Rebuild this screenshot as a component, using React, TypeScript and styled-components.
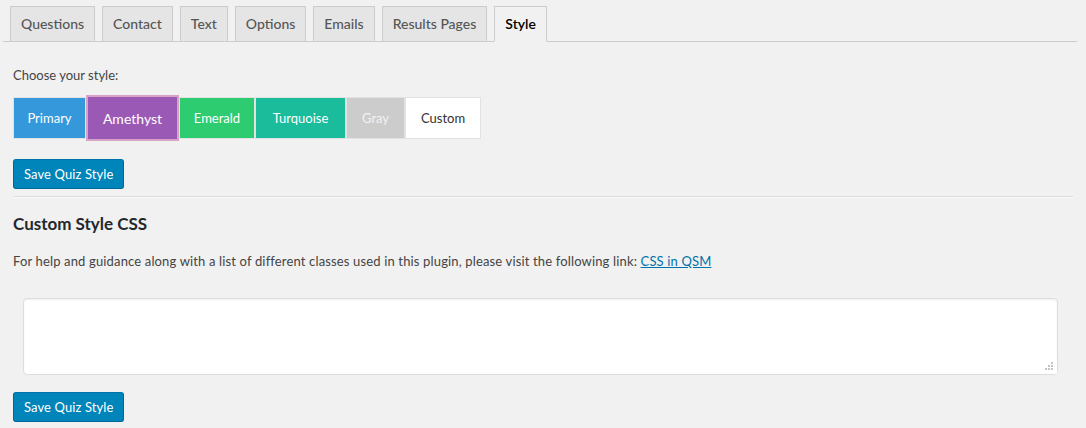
import React, { useState } from "react";
import styled, { createGlobalStyle, css } from "styled-components";

const FONT = `Lato, "Noto Sans", "Liberation Sans", sans-serif`;

const GlobalStyle = createGlobalStyle`
  html, body {
    margin: 0;
    padding: 0;
    background: #f1f1f1;
    font-family: ${FONT};
    font-size: 13px;
    color: #444;
  }
`;

const Wrap = styled.div`
  padding: 0 9px 0 3px;
`;

const TabBar = styled.nav`
  display: flex;
  gap: 7px;
  padding: 6px 0 0 7px;
  border-bottom: 1px solid #ccc;
`;

const Tab = styled.a<{ $active?: boolean }>`
  display: block;
  margin-bottom: -1px;
  padding: 5px 10px;
  font-size: 14px;
  line-height: 24px;
  font-weight: 500;
  color: #555;
  background: #e5e5e5;
  border: 1px solid #ccc;
  text-decoration: none;
  cursor: pointer;
  white-space: nowrap;
  ${(p) =>
    p.$active &&
    css`
      font-weight: 600;
      background: #f1f1f1;
      color: #000;
      border-bottom-color: #f1f1f1;
    `}
`;

const Content = styled.div`
  padding: 0 4px 0 10px;
`;

const Label = styled.p`
  margin: 24px 0 0;
  line-height: 18px;
  font-size: 13px;
  color: #444;
`;

const StyleRow = styled.div`
  display: flex;
  align-items: center;
  height: 46px;
  margin-top: 11px;
`;

const StyleButton = styled.button<{ $bg: string; $fg: string; $width: number; $selected?: boolean }>`
  box-sizing: border-box;
  width: ${(p) => p.$width}px;
  height: 42px;
  margin: 0;
  padding: 0;
  font-family: ${FONT};
  font-size: 13px;
  background: ${(p) => p.$bg};
  color: ${(p) => p.$fg};
  border: 1px solid #e2e2e2;
  cursor: pointer;
  ${(p) =>
    p.$selected &&
    css`
      height: 46px;
      font-size: 14px;
      border: 2px solid #d8a2c6;
    `}
`;

const SaveButton = styled.button<{ $top: number }>`
  display: block;
  box-sizing: border-box;
  height: 30px;
  margin-top: ${(p) => p.$top}px;
  padding: 0 10px 1px;
  font-family: ${FONT};
  font-size: 13px;
  letter-spacing: 0.1px;
  color: #fff;
  background: #0085ba;
  border: 1px solid #0073aa;
  border-color: #0073aa #006799 #006799;
  border-radius: 3px;
  cursor: pointer;
`;

const Rule = styled.hr`
  margin: 7px 0 0;
  border: 0;
  border-top: 1px solid #ddd;
  border-bottom: 1px solid #fafafa;
`;

const Heading = styled.h2`
  margin: 15px 0 0;
  font-size: 17px;
  line-height: 22px;
  font-weight: 700;
  color: #23282d;
`;

const Help = styled.p`
  margin: 17px 0 0;
  font-size: 13px;
  line-height: 18px;
  letter-spacing: 0.15px;
  color: #444;
`;

const HelpLink = styled.a`
  color: #0073aa;
  text-decoration: underline;
`;

const Field = styled.div`
  padding: 0 15px 0 10px;
  margin-top: 28px;
`;

const dot = "linear-gradient(#c4c4c4, #c4c4c4)";

const CssArea = styled.textarea`
  display: block;
  box-sizing: border-box;
  width: 100%;
  height: 77px;
  margin: 0;
  padding: 6px 8px;
  font-family: ${FONT};
  font-size: 13px;
  background: #fff;
  border: 1px solid #ddd;
  border-radius: 4px;
  box-shadow: inset 0 1px 2px rgba(0, 0, 0, 0.07);
  outline: none;
  resize: vertical;

  &::-webkit-resizer {
    background-color: #fff;
    background-image: ${dot}, ${dot}, ${dot}, ${dot}, ${dot}, ${dot};
    background-size: 2px 2px;
    background-repeat: no-repeat;
    background-position: 9px 3px, 6px 6px, 9px 6px, 3px 9px, 6px 9px, 9px 9px;
  }
`;

const tabs = ["Questions", "Contact", "Text", "Options", "Emails", "Results Pages", "Style"];

const styles = [
  { name: "Primary", bg: "#3498db", fg: "#fff", width: 73 },
  { name: "Amethyst", bg: "#9b59b6", fg: "#fff", width: 93 },
  { name: "Emerald", bg: "#2ecc71", fg: "#fff", width: 76 },
  { name: "Turquoise", bg: "#1abc9c", fg: "#fff", width: 91 },
  { name: "Gray", bg: "#cccccc", fg: "#f2f2f2", width: 59 },
  { name: "Custom", bg: "#ffffff", fg: "#333", width: 76 },
];

export default function App() {
  const [selected, setSelected] = useState("Amethyst");
  return (
    <Wrap>
      <GlobalStyle />
      <TabBar>
        {tabs.map((t) => (
          <Tab key={t} $active={t === "Style"}>
            {t}
          </Tab>
        ))}
      </TabBar>
      <Content>
        <Label>Choose your style:</Label>
        <StyleRow>
          {styles.map((s) => (
            <StyleButton
              key={s.name}
              $bg={s.bg}
              $fg={s.fg}
              $width={s.width}
              $selected={s.name === selected}
              onClick={() => setSelected(s.name)}
            >
              {s.name}
            </StyleButton>
          ))}
        </StyleRow>
        <SaveButton $top={18}>Save Quiz Style</SaveButton>
        <Rule />
        <Heading>Custom Style CSS</Heading>
        <Help>
          For help and guidance along with a list of different classes used in this plugin, please visit the
          following link: <HelpLink href="#">CSS in QSM</HelpLink>
        </Help>
        <Field>
          <CssArea />
        </Field>
        <SaveButton $top={17}>Save Quiz Style</SaveButton>
      </Content>
    </Wrap>
  );
}
